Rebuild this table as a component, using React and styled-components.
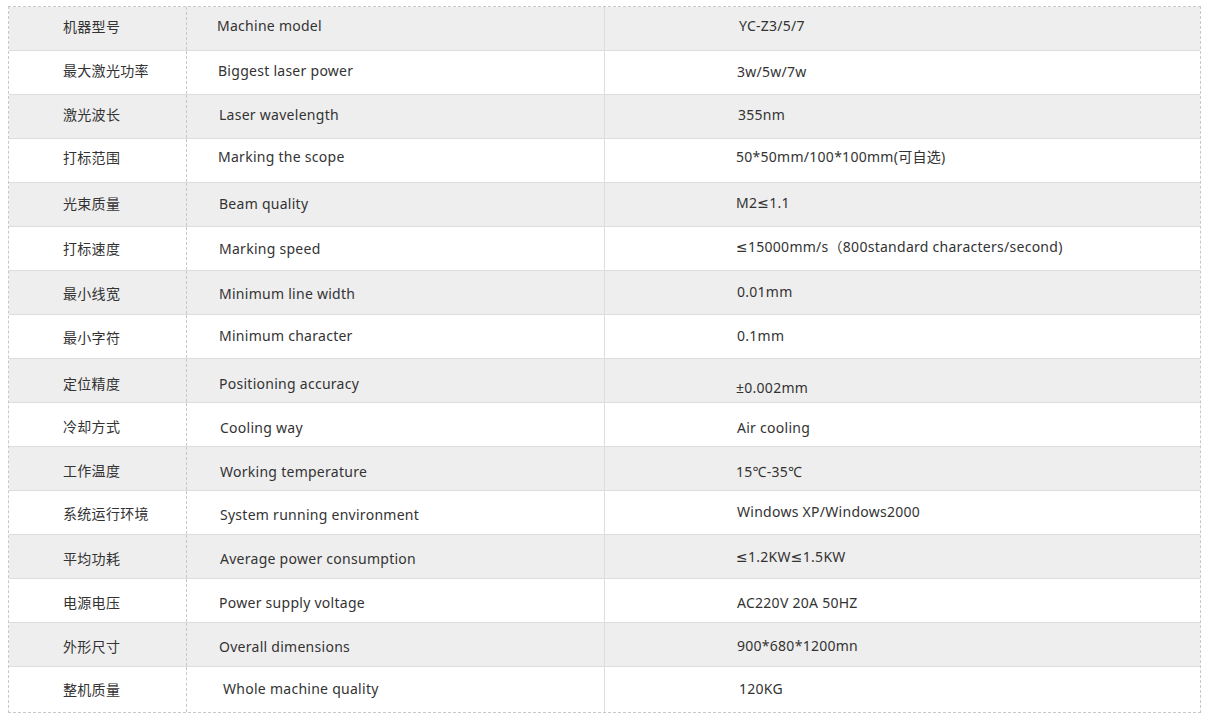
import React from "react";
import styled, { createGlobalStyle } from "styled-components";

const Global = createGlobalStyle`
  html, body { margin: 0; padding: 0; background: #ffffff; }
  body { font-family: "Noto Sans", "DejaVu Sans", "Noto Sans CJK SC", sans-serif; color: #333333; }
`;

const Page = styled.div`
  padding: 6px 11px 10px 8px;
`;

const Table = styled.div`
  border: 1px dashed #c8c8c8;
  width: 1193px;
  box-sizing: border-box;
`;

const Row = styled.div`
  display: grid;
  grid-template-columns: 178px 418px 1fr;
  height: ${(p) => (p.$last ? 45 : 44)}px;
  box-sizing: border-box;
  border-bottom: ${(p) => (p.$last ? "none" : "1px solid #dddddd")};
  background: ${(p) => (p.$alt ? "#eeeeee" : "#ffffff")};
`;

const Cell = styled.div`
  display: flex;
  align-items: center;
  box-sizing: border-box;
  font-size: 14px;
  line-height: 20px;
  letter-spacing: 0.27px;
  white-space: nowrap;
  padding-top: ${(p) => Math.max(0, p.$dy || 0) * 2}px;
  padding-bottom: ${(p) => Math.max(0, -(p.$dy || 0)) * 2}px;
`;

const NameCell = styled(Cell)`
  padding-left: 54px;
  font-family: "Noto Sans CJK SC", sans-serif;
  font-size: 14px;
  letter-spacing: 0.3px;
  border-right: 1px dashed #c8c8c8;
`;

const EnCell = styled(Cell)`
  padding-left: ${(p) => 32 + (p.$dx || 0)}px;
  border-right: 1px solid #dddddd;
`;

const ValCell = styled(Cell)`
  padding-left: ${(p) => 132 + (p.$dx || 0)}px;
`;

const rows = [
  ["机器型号", "Machine model", "YC-Z3/5/7", [-3, -3, -3], [-2, 2]],
  ["最大激光功率", "Biggest laser power", "3w/5w/7w", [-3, -2, -1], [-1, 0]],
  ["激光波长", "Laser wavelength", "355nm", [-3, -2, -2], [0, 1]],
  ["打标范围", "Marking the scope", "50*50mm/100*100mm(可自选)", [-4, -4, -4], [-1, -1]],
  ["光束质量", "Beam quality", "M2≤1.1", [-2, -1, -2], [0, -1]],
  ["打标速度", "Marking speed", "≤15000mm/s（800standard characters/second)", [-1, 0, -2], [0, -1]],
  ["最小线宽", "Minimum line width", "0.01mm", [0, 1, -1], [0, 0]],
  ["最小字符", "Minimum character", "0.1mm", [0, -1, -1], [0, 0]],
  ["定位精度", "Positioning accuracy", "±0.002mm", [2, 3, 7], [0, -1]],
  ["冷却方式", "Cooling way", "Air cooling", [1, 3, 3], [1, 0]],
  ["工作温度", "Working temperature", "15℃-35℃", [1, 3, 3], [1, -1]],
  ["系统运行环境", "System running environment", "Windows XP/Windows2000", [0, 2, -1], [1, 0]],
  ["平均功耗", "Average power consumption", "≤1.2KW≤1.5KW", [1, 2, 0], [1, -1]],
  ["电源电压", "Power supply voltage", "AC220V 20A 50HZ", [1, 2, 2], [0, 0]],
  ["外形尺寸", "Overall dimensions", "900*680*1200mn", [1, 2, 1], [0, 0]],
  ["整机质量", "Whole machine quality", "120KG", [-1, -1, -1], [4, 2]],
];

export default function App() {
  return (
    <Page>
      <Global />
      <Table>
        {rows.map(([cn, en, val, dy, dx], i) => (
          <Row key={cn} $alt={i % 2 === 0} $last={i === rows.length - 1}>
            <NameCell $dy={dy[0]}>{cn}</NameCell>
            <EnCell $dy={dy[1]} $dx={dx[0]}>{en}</EnCell>
            <ValCell $dy={dy[2]} $dx={dx[1]}>{val}</ValCell>
          </Row>
        ))}
      </Table>
    </Page>
  );
}
